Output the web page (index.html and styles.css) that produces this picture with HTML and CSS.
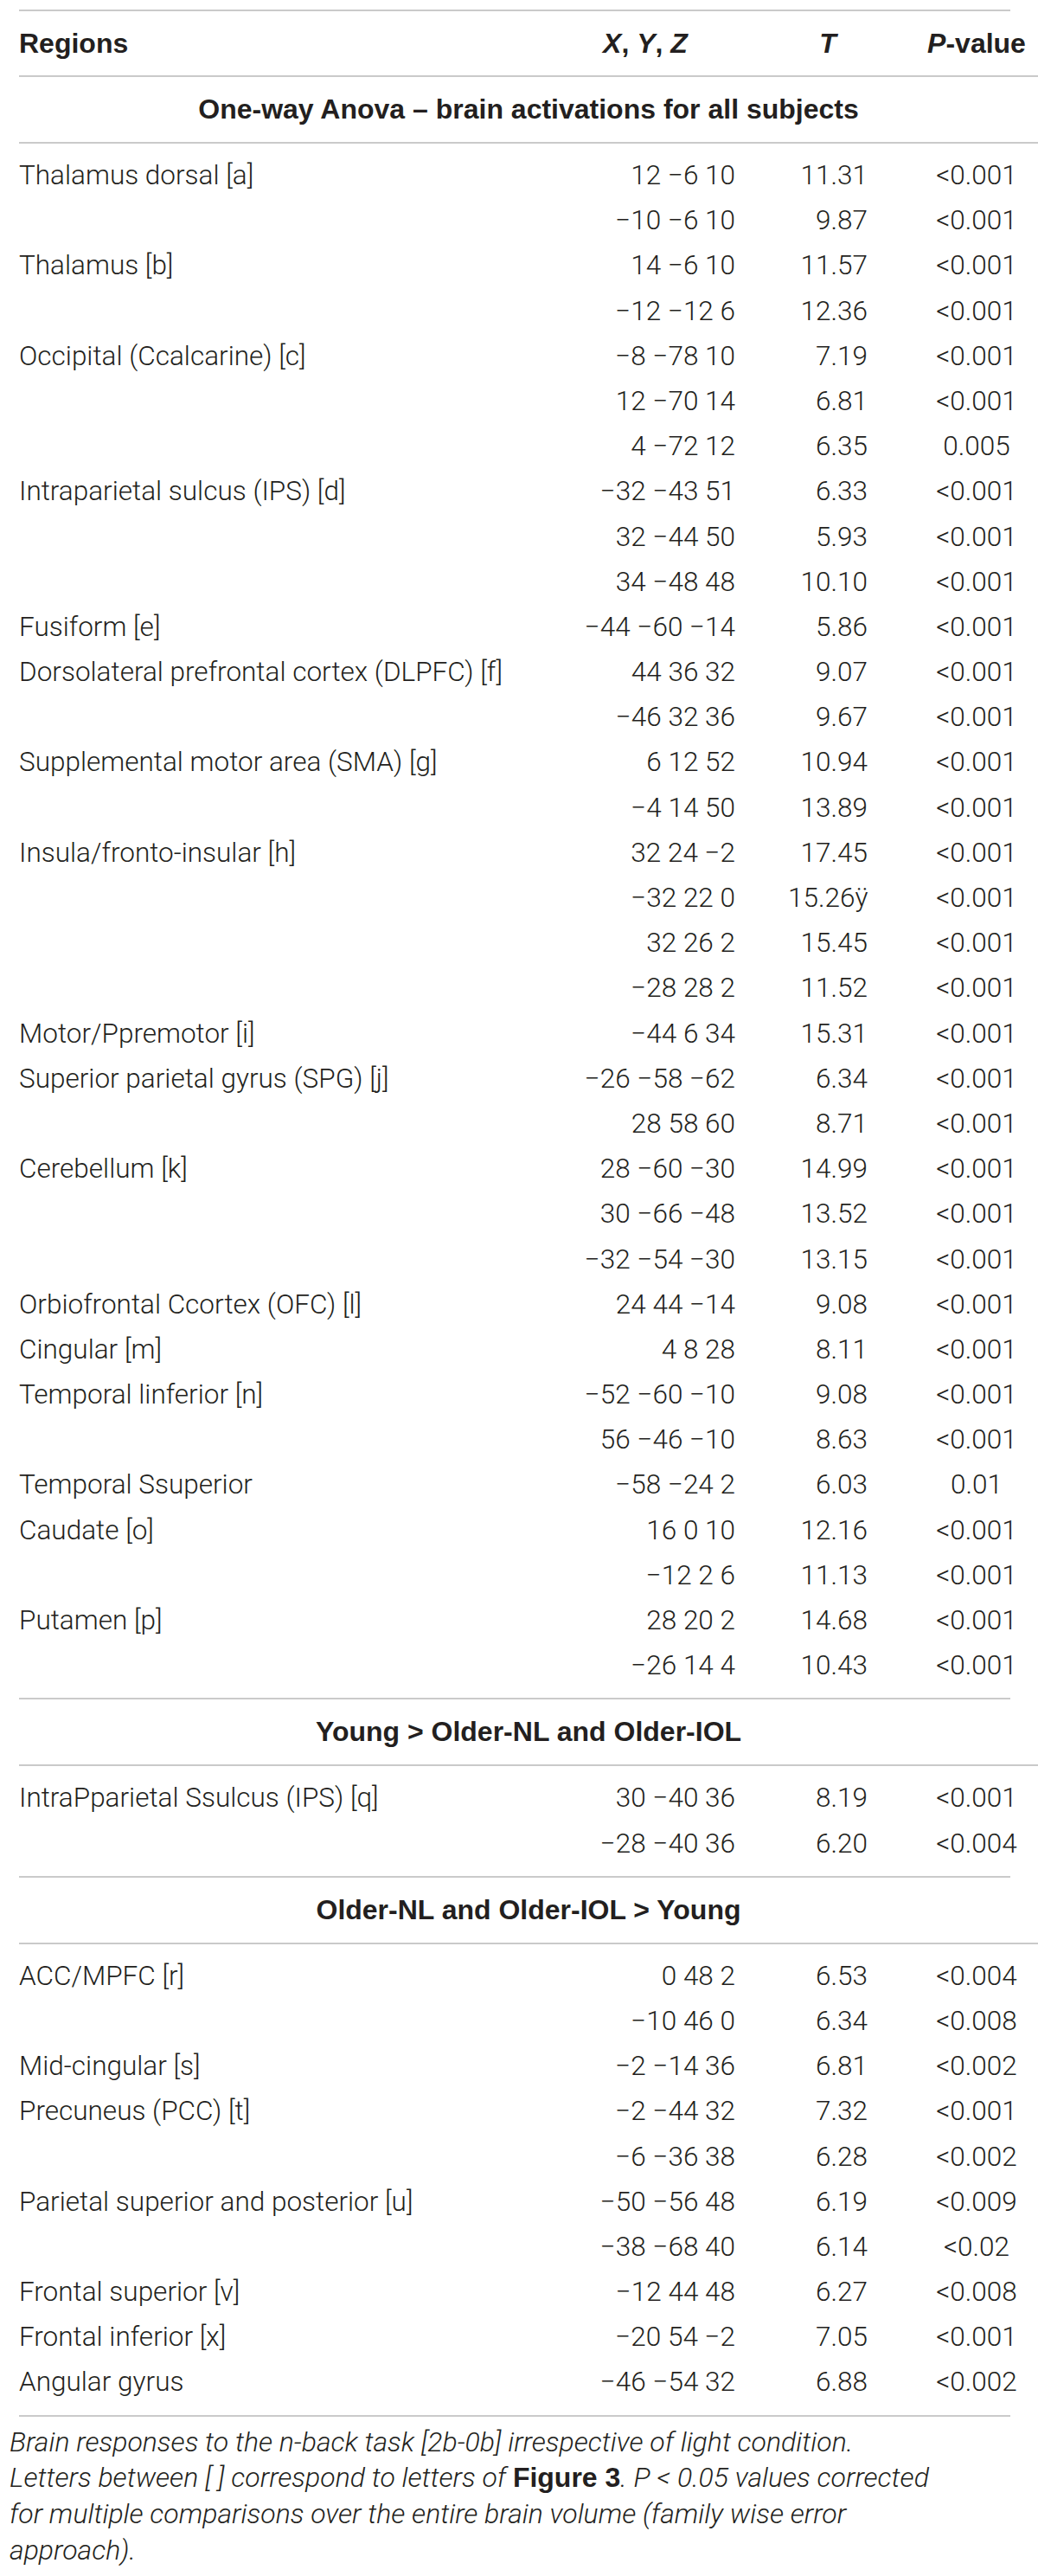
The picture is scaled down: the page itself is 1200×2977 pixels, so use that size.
FILE: index.html
```html
<!DOCTYPE html>
<html lang="en">
<head>
<meta charset="utf-8">
<title>Brain responses to the n-back task</title>
<link rel="stylesheet" href="styles.css">
</head>
<body>
<div class="tbl">
  <div class="row head">
    <div class="c1">Regions</div>
    <div class="c2"><i>X</i>, <i>Y</i>, <i>Z</i></div>
    <div class="c3"><i>T</i></div>
    <div class="c4"><i>P</i>-value</div>
  </div>

  <div class="title">One-way Anova – brain activations for all subjects</div>
  <div class="group">
    <div class="row"><div class="c1">Thalamus dorsal [a]</div><div class="c2">12 −6 10</div><div class="c3">11.31</div><div class="c4">&lt;0.001</div></div>
    <div class="row"><div class="c1"></div><div class="c2">−10 −6 10</div><div class="c3">9.87</div><div class="c4">&lt;0.001</div></div>
    <div class="row"><div class="c1">Thalamus [b]</div><div class="c2">14 −6 10</div><div class="c3">11.57</div><div class="c4">&lt;0.001</div></div>
    <div class="row"><div class="c1"></div><div class="c2">−12 −12 6</div><div class="c3">12.36</div><div class="c4">&lt;0.001</div></div>
    <div class="row"><div class="c1">Occipital (Ccalcarine) [c]</div><div class="c2">−8 −78 10</div><div class="c3">7.19</div><div class="c4">&lt;0.001</div></div>
    <div class="row"><div class="c1"></div><div class="c2">12 −70 14</div><div class="c3">6.81</div><div class="c4">&lt;0.001</div></div>
    <div class="row"><div class="c1"></div><div class="c2">4 −72 12</div><div class="c3">6.35</div><div class="c4">0.005</div></div>
    <div class="row"><div class="c1">Intraparietal sulcus (IPS) [d]</div><div class="c2">−32 −43 51</div><div class="c3">6.33</div><div class="c4">&lt;0.001</div></div>
    <div class="row"><div class="c1"></div><div class="c2">32 −44 50</div><div class="c3">5.93</div><div class="c4">&lt;0.001</div></div>
    <div class="row"><div class="c1"></div><div class="c2">34 −48 48</div><div class="c3">10.10</div><div class="c4">&lt;0.001</div></div>
    <div class="row"><div class="c1">Fusiform [e]</div><div class="c2">−44 −60 −14</div><div class="c3">5.86</div><div class="c4">&lt;0.001</div></div>
    <div class="row"><div class="c1">Dorsolateral prefrontal cortex (DLPFC) [f]</div><div class="c2">44 36 32</div><div class="c3">9.07</div><div class="c4">&lt;0.001</div></div>
    <div class="row"><div class="c1"></div><div class="c2">−46 32 36</div><div class="c3">9.67</div><div class="c4">&lt;0.001</div></div>
    <div class="row"><div class="c1">Supplemental motor area (SMA) [g]</div><div class="c2">6 12 52</div><div class="c3">10.94</div><div class="c4">&lt;0.001</div></div>
    <div class="row"><div class="c1"></div><div class="c2">−4 14 50</div><div class="c3">13.89</div><div class="c4">&lt;0.001</div></div>
    <div class="row"><div class="c1">Insula/fronto-insular [h]</div><div class="c2">32 24 −2</div><div class="c3">17.45</div><div class="c4">&lt;0.001</div></div>
    <div class="row"><div class="c1"></div><div class="c2">−32 22 0</div><div class="c3">15.26ÿ</div><div class="c4">&lt;0.001</div></div>
    <div class="row"><div class="c1"></div><div class="c2">32 26 2</div><div class="c3">15.45</div><div class="c4">&lt;0.001</div></div>
    <div class="row"><div class="c1"></div><div class="c2">−28 28 2</div><div class="c3">11.52</div><div class="c4">&lt;0.001</div></div>
    <div class="row"><div class="c1">Motor/Ppremotor [i]</div><div class="c2">−44 6 34</div><div class="c3">15.31</div><div class="c4">&lt;0.001</div></div>
    <div class="row"><div class="c1">Superior parietal gyrus (SPG) [j]</div><div class="c2">−26 −58 −62</div><div class="c3">6.34</div><div class="c4">&lt;0.001</div></div>
    <div class="row"><div class="c1"></div><div class="c2">28 58 60</div><div class="c3">8.71</div><div class="c4">&lt;0.001</div></div>
    <div class="row"><div class="c1">Cerebellum [k]</div><div class="c2">28 −60 −30</div><div class="c3">14.99</div><div class="c4">&lt;0.001</div></div>
    <div class="row"><div class="c1"></div><div class="c2">30 −66 −48</div><div class="c3">13.52</div><div class="c4">&lt;0.001</div></div>
    <div class="row"><div class="c1"></div><div class="c2">−32 −54 −30</div><div class="c3">13.15</div><div class="c4">&lt;0.001</div></div>
    <div class="row"><div class="c1">Orbiofrontal Ccortex (OFC) [l]</div><div class="c2">24 44 −14</div><div class="c3">9.08</div><div class="c4">&lt;0.001</div></div>
    <div class="row"><div class="c1">Cingular [m]</div><div class="c2">4 8 28</div><div class="c3">8.11</div><div class="c4">&lt;0.001</div></div>
    <div class="row"><div class="c1">Temporal linferior [n]</div><div class="c2">−52 −60 −10</div><div class="c3">9.08</div><div class="c4">&lt;0.001</div></div>
    <div class="row"><div class="c1"></div><div class="c2">56 −46 −10</div><div class="c3">8.63</div><div class="c4">&lt;0.001</div></div>
    <div class="row"><div class="c1">Temporal Ssuperior</div><div class="c2">−58 −24 2</div><div class="c3">6.03</div><div class="c4">0.01</div></div>
    <div class="row"><div class="c1">Caudate [o]</div><div class="c2">16 0 10</div><div class="c3">12.16</div><div class="c4">&lt;0.001</div></div>
    <div class="row"><div class="c1"></div><div class="c2">−12 2 6</div><div class="c3">11.13</div><div class="c4">&lt;0.001</div></div>
    <div class="row"><div class="c1">Putamen [p]</div><div class="c2">28 20 2</div><div class="c3">14.68</div><div class="c4">&lt;0.001</div></div>
    <div class="row"><div class="c1"></div><div class="c2">−26 14 4</div><div class="c3">10.43</div><div class="c4">&lt;0.001</div></div>
  </div>

  <div class="title">Young &gt; Older-NL and Older-IOL</div>
  <div class="group">
    <div class="row"><div class="c1">IntraPparietal Ssulcus (IPS) [q]</div><div class="c2">30 −40 36</div><div class="c3">8.19</div><div class="c4">&lt;0.001</div></div>
    <div class="row"><div class="c1"></div><div class="c2">−28 −40 36</div><div class="c3">6.20</div><div class="c4">&lt;0.004</div></div>
  </div>

  <div class="title">Older-NL and Older-IOL &gt; Young</div>
  <div class="group">
    <div class="row"><div class="c1">ACC/MPFC [r]</div><div class="c2">0 48 2</div><div class="c3">6.53</div><div class="c4">&lt;0.004</div></div>
    <div class="row"><div class="c1"></div><div class="c2">−10 46 0</div><div class="c3">6.34</div><div class="c4">&lt;0.008</div></div>
    <div class="row"><div class="c1">Mid-cingular [s]</div><div class="c2">−2 −14 36</div><div class="c3">6.81</div><div class="c4">&lt;0.002</div></div>
    <div class="row"><div class="c1">Precuneus (PCC) [t]</div><div class="c2">−2 −44 32</div><div class="c3">7.32</div><div class="c4">&lt;0.001</div></div>
    <div class="row"><div class="c1"></div><div class="c2">−6 −36 38</div><div class="c3">6.28</div><div class="c4">&lt;0.002</div></div>
    <div class="row"><div class="c1">Parietal superior and posterior [u]</div><div class="c2">−50 −56 48</div><div class="c3">6.19</div><div class="c4">&lt;0.009</div></div>
    <div class="row"><div class="c1"></div><div class="c2">−38 −68 40</div><div class="c3">6.14</div><div class="c4">&lt;0.02</div></div>
    <div class="row"><div class="c1">Frontal superior [v]</div><div class="c2">−12 44 48</div><div class="c3">6.27</div><div class="c4">&lt;0.008</div></div>
    <div class="row"><div class="c1">Frontal inferior [x]</div><div class="c2">−20 54 −2</div><div class="c3">7.05</div><div class="c4">&lt;0.001</div></div>
    <div class="row"><div class="c1">Angular gyrus</div><div class="c2">−46 −54 32</div><div class="c3">6.88</div><div class="c4">&lt;0.002</div></div>
  </div>
</div>

<p class="caption">Brain responses to the n-back task [2b-0b] irrespective of light condition.<br>Letters between [ ] correspond to letters of <b>Figure 3</b>. <i>P</i> &lt; 0.05 values corrected<br>for multiple comparisons over the entire brain volume (family wise error<br>approach).</p>
</body>
</html>
```

FILE: styles.css
```css
html, body {
  margin: 0;
  padding: 0;
  background: #ffffff;
}

body {
  font-family: Roboto, "Liberation Sans", Arial, sans-serif;
  font-weight: 300;
  color: #231f20;
  overflow-x: hidden;
}

.tbl {
  margin: 11px 0 0 22px;
  width: 1146px;
  border-top: 2px solid #cacaca;
  border-bottom: 2px solid #cacaca;
}

.row {
  display: grid;
  grid-template-columns: 620px 208px 153px 197px;
  margin-right: -32px;
  height: 52.2px;
  align-items: center;
  font-size: 31.5px;
  line-height: 52.2px;
  white-space: nowrap;
}

.c2 {
  text-align: right;
}

.c3 {
  text-align: right;
  padding-left: 61px;
}

.c4 {
  text-align: center;
  padding-left: 55px;
}

.row.head {
  height: 74px;
  line-height: 74px;
  font-family: "Liberation Sans", Arial, sans-serif;
  font-size: 32px;
  font-weight: bold;
  border-bottom: 2px solid #cacaca;
}

.row.head .c2,
.row.head .c3 {
  text-align: center;
}

.title {
  margin-right: -32px;
  height: 75px;
  line-height: 75px;
  text-align: center;
  font-family: "Liberation Sans", Arial, sans-serif;
  font-size: 32px;
  font-weight: bold;
  border-bottom: 2px solid #cacaca;
}

.group {
  padding: 11px 0;
  border-bottom: 2px solid #cacaca;
}

.group:last-child {
  border-bottom: none;
}

.caption {
  margin: 9px 0 0 0;
  padding-left: 11px;
  font-size: 32px;
  line-height: 41.7px;
  font-style: italic;
  white-space: nowrap;
}

.caption b {
  font-family: "Liberation Sans", Arial, sans-serif;
  font-style: normal;
  font-weight: bold;
}
```
